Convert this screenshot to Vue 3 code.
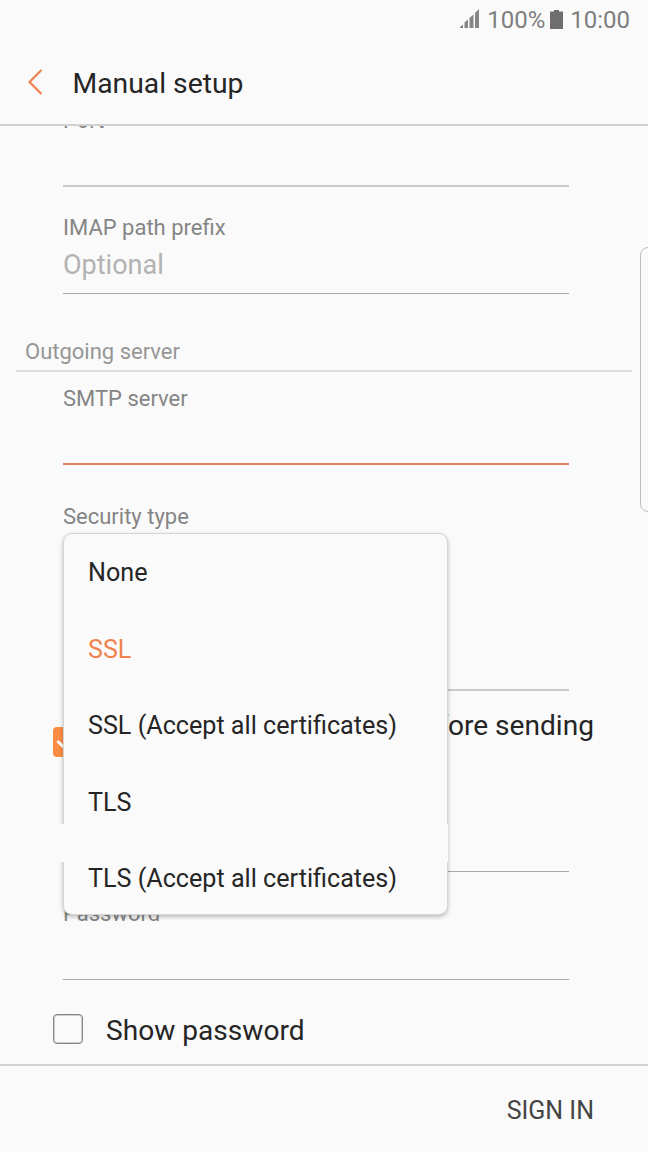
<template>
  <div class="screen">
    <div class="status-bar">
      <svg class="signal" width="20" height="20" viewBox="0 0 20 20">
        <path d="M0 19V18L3 15.500V19ZM4.500 19V13.500L8 10.500V19ZM9.500 19V9L13.500 5.500V19ZM15 19V4L19 0V19Z" />
      </svg>
      <span class="battery-level">100%</span>
      <svg class="battery" width="13" height="19" viewBox="0 0 13 19">
        <path d="M4 0H9V1.500H13V19H0V1.500H4Z" />
      </svg>
      <span class="clock">10:00</span>
    </div>

    <header class="title-bar">
      <svg class="back" width="16" height="28" viewBox="0 0 16 28">
        <path d="M14.500 2L2.500 14L14.500 26" />
      </svg>
      <h1>Manual setup</h1>
    </header>

    <main class="content">
      <div class="field port-in">
        <label>Port</label>
      </div>
      <div class="field thin imap">
        <label>IMAP path prefix</label>
        <span class="placeholder">Optional</span>
      </div>
      <h2 class="section">Outgoing server</h2>
      <div class="field active smtp">
        <label>SMTP server</label>
      </div>
      <div class="field security">
        <label>Security type</label>
        <ul class="menu">
          <li
            v-for="option in options"
            :key="option"
            :class="{ selected: option === selected }"
            @click="selected = option"
          >
            <span>{{ option }}</span>
          </li>
        </ul>
      </div>
      <div class="field port-out">
        <label>Port</label>
      </div>
      <div class="check-row auth">
        <span class="box checked">
          <svg width="30" height="30" viewBox="0 0 30 30">
            <path d="M4.500 14L12 21.500L25.500 8" />
          </svg>
        </span>
        <span class="check-label">Require authentication before sending emails</span>
      </div>
      <div class="field thin user">
        <label>User name</label>
      </div>
      <div class="field thin password">
        <label>Password</label>
      </div>
      <div class="check-row show">
        <span class="box"></span>
        <span class="check-label">Show password</span>
      </div>
      <div class="edge-handle"></div>
    </main>

    <footer class="footer">
      <button>SIGN IN</button>
    </footer>
  </div>
</template>

<script setup>
import { ref } from 'vue';

const options = [
  'None',
  'SSL',
  'SSL (Accept all certificates)',
  'TLS',
  'TLS (Accept all certificates)'
];

const selected = ref('SSL');
</script>

<style>
body {
  margin: 0;
  background: #fafafa;
}
</style>

<style scoped>
.screen {
  display: flex;
  flex-direction: column;
  width: 648px;
  height: 1152px;
  overflow: hidden;
  background: #fafafa;
  color: #252525;
  font-family: Roboto, "Liberation Sans", sans-serif;
}
.status-bar {
  display: flex;
  justify-content: flex-end;
  align-items: center;
  height: 40px;
  padding-right: 18px;
  box-sizing: border-box;
  color: #7e7e7e;
  font-size: 24px;
}
.signal {
  fill: #858585;
  margin: -2px 7px 0 0;
}
.battery {
  fill: #6e6e6e;
  margin: -2px 7.5px 0 4.5px;
}
.title-bar {
  display: flex;
  align-items: center;
  height: 86px;
  padding-left: 27px;
  box-sizing: border-box;
  border-bottom: 2px solid #d2d2d2;
}
.back {
  fill: none;
  stroke: #f0824f;
  stroke-width: 2.2;
}
h1 {
  margin: 2px 0 0 29.5px;
  font-size: 28.3px;
  font-weight: 400;
}
.content {
  position: relative;
  flex: 1;
  overflow: hidden;
}
.field {
  position: relative;
  display: flex;
  flex-direction: column;
  height: 80px;
  margin: 28px 79px 0 63px;
  box-sizing: border-box;
  border-bottom: 2px solid #c9cbca;
}
.field.thin {
  border-bottom: 1px solid #a6a8a7;
}
.field.active {
  height: 81px;
  border-bottom-color: #dd8063;
}
.field label {
  color: #858585;
  font-size: 22px;
  line-height: 27px;
}
.placeholder {
  color: #b2b2b2;
  font-size: 27px;
  line-height: 48px;
}
.field.port-in {
  margin-top: -19px;
}
.field.imap {
  margin-top: 27px;
}
.section {
  margin: 44px 16px 0;
  padding-left: 9px;
  height: 34px;
  box-sizing: border-box;
  border-bottom: 2px solid #dedede;
  color: #969696;
  font-size: 22px;
  font-weight: 400;
  line-height: 27px;
}
.field.smtp {
  margin-top: 12px;
}
.field.smtp label,
.field.password label {
  line-height: 29px;
}
.field.security {
  margin-top: 38px;
  border-bottom-color: transparent;
}
.menu {
  position: absolute;
  z-index: 2;
  top: 30px;
  left: 0;
  width: 385px;
  height: 382px;
  margin: 0;
  padding: 1px 0 0 24px;
  box-sizing: border-box;
  list-style: none;
  background: #fafafa;
  border: 1px solid #d5d5d5;
  border-radius: 9px;
  box-shadow: 0 2px 4px rgba(0, 0, 0, 0.25);
}
.menu li {
  height: 76.5px;
  font-size: 25.15px;
  line-height: 76.5px;
}
.menu li.selected {
  color: #f0824f;
}
/* blank strip between the last two rows */
.menu::after {
  content: "";
  position: absolute;
  top: 290px;
  left: -6px;
  width: 390px;
  height: 38px;
  background: #fafafa;
}
.menu span {
  position: relative;
  z-index: 1;
}
.check-row {
  display: flex;
  align-items: center;
  margin-left: 52.5px;
  font-size: 28.1px;
}
.auth {
  height: 66px;
  margin-top: 18px;
  line-height: 33px;
}
.show {
  height: 34px;
  margin-top: 32px;
}
.box {
  width: 30px;
  height: 30px;
  flex: none;
  box-sizing: border-box;
  border: 1px solid #858585;
  border-radius: 4px;
  box-shadow: inset 0 0 0 1px #cfcfcf;
}
.box.checked {
  border: none;
  background: #fb8c44;
  box-shadow: none;
}
.box svg {
  display: block;
  fill: none;
  stroke: #fff;
  stroke-width: 3;
}
.check-label {
  width: 500px;
  margin-left: 23.5px;
}
.auth .check-label {
  margin-left: 37px;
}
.show .check-label {
  padding-top: 3px;
}
.field.user {
  margin-top: 17px;
}
.field.password {
  margin-top: 27px;
  height: 81px;
}
.edge-handle {
  position: absolute;
  top: 121px;
  right: -10px;
  width: 18px;
  height: 265px;
  box-sizing: border-box;
  border: 1px solid #bdbdbd;
  border-radius: 8px;
}
.footer {
  display: flex;
  justify-content: flex-end;
  align-items: center;
  height: 88px;
  padding: 2px 54px 0 0;
  box-sizing: border-box;
  border-top: 2px solid #d2d2d2;
}
.footer button {
  padding: 0;
  border: none;
  background: none;
  color: #444;
  font-family: inherit;
  font-size: 25px;
}
</style>
